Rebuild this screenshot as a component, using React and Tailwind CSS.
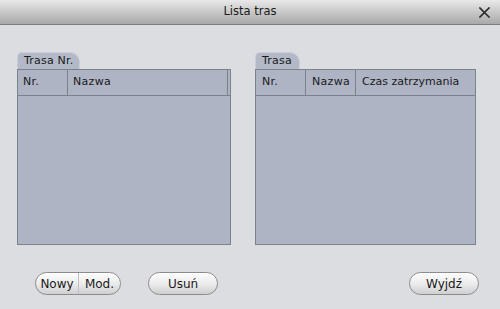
export default function App() {
  const font = { fontFamily: '"DejaVu Sans", Verdana, sans-serif' };
  const btn =
    "h-[23px] rounded-full border border-[#8c8c8c] bg-gradient-to-b from-[#fdfdfd] via-[#ececec] to-[#cfcfcf] text-[12px] text-[#1a1a1a] flex items-center justify-center shadow-[inset_0_1px_0_#ffffff]";
  return (
    <div className="w-[500px] h-[309px] bg-[#dcdde1] flex flex-col overflow-hidden" style={font}>
      <div className="h-[25px] shrink-0 bg-gradient-to-b from-[#e9e9e9] to-[#a9a9a9] border-b border-[#7b7b7b] relative flex items-center justify-center">
        <span className="text-[11.5px] text-[#1a1a1a]">Lista tras</span>
        <svg className="absolute right-[10px] top-[7px]" width="11" height="11" viewBox="0 0 11 11">
          <path d="M1 1 L10 10 M10 1 L1 10" stroke="#2a2a2a" strokeWidth="1.6" strokeLinecap="square" />
        </svg>
      </div>
      <div className="flex pl-[17px] pt-[27px]">
        <div className="w-[214px] flex flex-col">
          <div className="h-[17px] w-[63px] rounded-tl-[5px] rounded-tr-[10px] bg-[#b3b9c7] border-t border-l border-r border-[#c9ced8] flex items-center pl-[6px] text-[11px] text-[#1a1a1a] tracking-[0.2px]">
            Trasa Nr.
          </div>
          <div className="h-[176px] bg-[#aeb4c4] border border-[#7c828c] flex flex-col">
            <div className="h-[26px] flex border-b border-[#7c828c] text-[11px] text-[#1a1a1a] tracking-[0.3px]">
              <div className="w-[50px] border-r border-[#7c828c] flex items-center pl-[5px]">Nr.</div>
              <div className="flex-1 border-r border-[#7c828c] flex items-center pl-[5px] mr-[2px]">Nazwa</div>
            </div>
          </div>
        </div>
        <div className="w-[221px] ml-[24px] flex flex-col">
          <div className="h-[17px] w-[45px] rounded-tl-[5px] rounded-tr-[10px] bg-[#b3b9c7] border-t border-l border-r border-[#c9ced8] flex items-center pl-[6px] text-[11px] text-[#1a1a1a] tracking-[0.2px]">
            Trasa
          </div>
          <div className="h-[176px] bg-[#aeb4c4] border border-[#7c828c] flex flex-col">
            <div className="h-[26px] flex border-b border-[#7c828c] text-[11px] text-[#1a1a1a] tracking-[0.3px]">
              <div className="w-[50px] border-r border-[#7c828c] flex items-center pl-[6px]">Nr.</div>
              <div className="w-[50px] border-r border-[#7c828c] flex items-center pl-[6px]">Nazwa</div>
              <div className="flex-1 flex items-center pl-[6px] tracking-normal">Czas zatrzymania</div>
            </div>
          </div>
        </div>
      </div>
      <div className="flex items-center pt-[27px] pl-[35px]">
        <div className={btn + " w-[86px] overflow-hidden"}>
          <div className="w-[43px] h-full flex items-center justify-center border-r border-[#c0c0c0]">Nowy</div>
          <div className="flex-1 h-full flex items-center justify-center">Mod.</div>
        </div>
        <div className={btn + " w-[70px] ml-[27px]"}>Usuń</div>
        <div className={btn + " w-[70px] ml-[191px]"}>Wyjdź</div>
      </div>
    </div>
  );
}
